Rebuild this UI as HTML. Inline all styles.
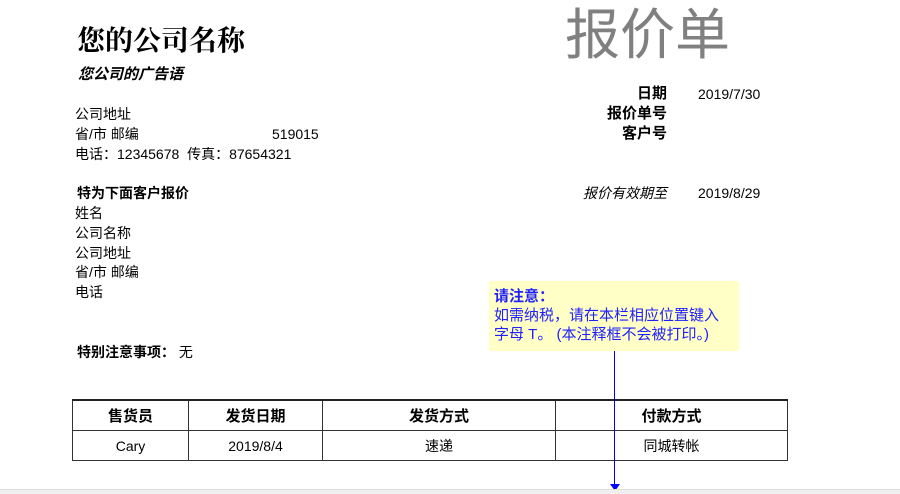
<!DOCTYPE html>
<html><head><meta charset="utf-8"><style>
body{margin:0;width:900px;height:493px;background:#fff;position:relative;overflow:hidden;font-family:"Liberation Sans","Noto Sans CJK SC",sans-serif;font-size:14px;color:#000}
.a{position:absolute;white-space:nowrap;line-height:18px}
.b{font-weight:bold}
.r{text-align:right}
table{position:absolute;left:72px;top:399px;border-collapse:collapse;width:716px}
td{border:1px solid #333;height:29px;text-align:center;font-size:14px;padding:0}
th{border:1px solid #333;border-top:2px solid #222;height:29px;font-size:15px;padding:0}
</style></head><body>
<div class="a b" style="left:77px;top:26px;font-size:28px;line-height:32px;font-family:'Liberation Serif','Noto Serif CJK SC',serif">您的公司名称</div>
<div class="a b" style="left:78px;top:66px;font-style:italic;font-size:15px">您公司的广告语</div>
<div class="a" style="left:565px;top:3px;font-size:55px;line-height:64px;color:#808080">报价单</div>
<div class="a" style="left:75px;top:105px">公司地址</div>
<div class="a" style="left:75px;top:125px">省/市 邮编</div>
<div class="a" style="left:272px;top:125px">519015</div>
<div class="a" style="left:75px;top:145px">电话：12345678&nbsp;&nbsp;传真：87654321</div>
<div class="a b r" style="left:540px;width:127px;top:85px;font-size:15px">日期</div>
<div class="a" style="left:698px;top:85px">2019/7/30</div>
<div class="a b r" style="left:540px;width:127px;top:105px;font-size:15px">报价单号</div>
<div class="a b r" style="left:540px;width:127px;top:125px;font-size:15px">客户号</div>
<div class="a r" style="left:540px;width:127px;top:184px;font-style:italic">报价有效期至</div>
<div class="a" style="left:698px;top:184px">2019/8/29</div>
<div class="a b" style="left:77px;top:184px">特为下面客户报价</div>
<div class="a" style="left:75px;top:204px">姓名</div>
<div class="a" style="left:75px;top:224px">公司名称</div>
<div class="a" style="left:75px;top:244px">公司地址</div>
<div class="a" style="left:75px;top:263px">省/市 邮编</div>
<div class="a" style="left:75px;top:283px">电话</div>
<div class="a" style="left:77px;top:343px"><b>特别注意事项：</b> 无</div>
<table><tr><th style="width:115px">售货员</th><th style="width:133px">发货日期</th><th style="width:232px">发货方式</th><th>付款方式</th></tr>
<tr><td>Cary</td><td>2019/8/4</td><td>速递</td><td>同城转帐</td></tr></table>
<div style="position:absolute;left:489px;top:281px;width:250px;height:70px;background:#ffffc6"></div>
<div class="a" style="left:494px;top:287px;color:#2020ff;line-height:19px;font-size:15px"><b>请注意：</b><br>如需纳税，请在本栏相应位置键入<br>字母 T。 (本注释框不会被打印。)</div>
<div style="position:absolute;left:614px;top:351px;width:1px;height:134px;background:#0000ff"></div>
<div style="position:absolute;left:610px;top:484px;width:0;height:0;border-left:5px solid transparent;border-right:5px solid transparent;border-top:7px solid #0000ff"></div>
<div style="position:absolute;left:0;top:489px;width:900px;height:4px;background:#f0f0f0;border-top:1px solid #ddd"></div>
</body></html>
